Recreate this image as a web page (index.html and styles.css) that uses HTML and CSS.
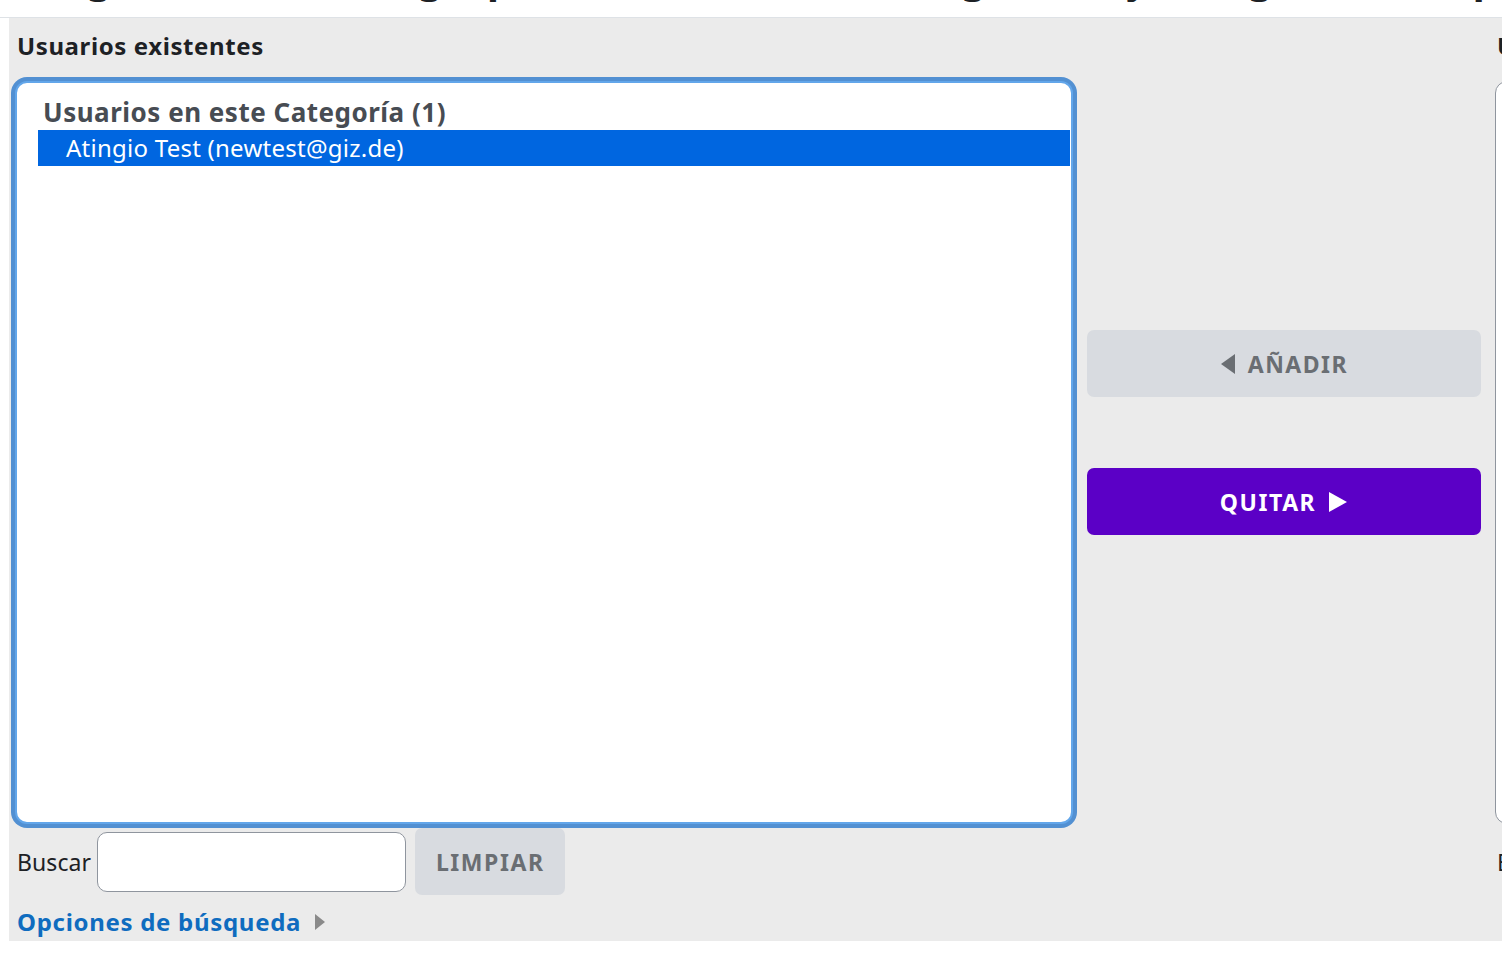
FILE: index.html
```html
<!DOCTYPE html>
<html lang="es">
<head>
<meta charset="utf-8">
<title>Asignar usuarios</title>
<link rel="stylesheet" href="styles.css">
</head>
<body>
<div class="page">
  <div class="page-head">
    <h2 class="page-title">Asignar usuarios al grupo de la institución Atingio Test y la organización principal</h2>
  </div>
  <div class="assign">
    <div class="col col-side">
      <div class="col-label">Usuarios existentes</div>
      <div class="listbox focused">
        <div class="optgroup">Usuarios en este Categoría (1)</div>
        <div class="option selected">Atingio Test (newtest@giz.de)</div>
      </div>
      <div class="search-row">
        <span class="search-label">Buscar</span>
        <span class="search-input"></span>
        <span class="btn btn-light">LIMPIAR</span>
      </div>
      <div class="options-link">Opciones de búsqueda
        <svg class="caret" width="11" height="18" viewBox="0 0 11 18"><polygon points="0,1 10,9 0,17" fill="#8a8a8a"/></svg>
      </div>
    </div>
    <div class="col col-mid">
      <span class="btn btn-light btn-wide">
        <svg width="16" height="20" viewBox="0 0 16 20"><polygon points="15,0 15,20 1,10" fill="#6a6e73"/></svg>
        AÑADIR
      </span>
      <span class="btn btn-primary btn-wide">
        QUITAR
        <svg width="20" height="20" viewBox="0 0 20 20"><polygon points="1,0 1,20 19,10" fill="#ffffff"/></svg>
      </span>
    </div>
    <div class="col col-side">
      <div class="col-label">Usuarios potenciales</div>
      <div class="listbox">
        <div class="optgroup">Usuarios potenciales (0)</div>
      </div>
      <div class="search-row">
        <span class="search-label">Buscar</span>
        <span class="search-input"></span>
        <span class="btn btn-light">LIMPIAR</span>
      </div>
    </div>
  </div>
</div>
</body>
</html>
```

FILE: styles.css
```css
html, body {
  margin: 0;
  padding: 0;
  background: #ffffff;
  overflow: hidden;
}
body {
  font-family: "Noto Sans", "Liberation Sans", sans-serif;
  color: #1d2125;
  width: 1502px;
  height: 956px;
}
.page {
  width: 2700px;
  padding-left: 9px;
}
.page-head {
  height: 17px;
  overflow: hidden;
  border-bottom: 1px solid #dee2e6;
  margin-left: -9px;
  padding-left: 9px;
}
.page-title {
  margin: -42px 0 0 18px;
  font-size: 40px;
  line-height: 1;
  font-weight: 700;
  white-space: nowrap;
  color: #1d2125;
}
.assign {
  display: flex;
  gap: 14px;
  background: #ebebeb;
  padding: 12px 0 3px 0;
}
.col-side {
  width: 1058px;
  padding-left: 6px;
  display: flex;
  flex-direction: column;
}
.col-side + .col-mid + .col-side {
  padding-left: 0;
}
.col-label {
  padding-left: 2px;
  font-size: 24px;
  line-height: 32px;
  font-weight: 700;
  letter-spacing: 0.6px;
  color: #1d2125;
  margin-bottom: 19px;
}
.listbox {
  box-sizing: border-box;
  height: 743px;
  border: 1.5px solid #8f959e;
  border-radius: 12px;
  background: #ffffff;
  padding: 11px 1px 0 21px;
}
.listbox.focused {
  border: 2px solid #62a6ea;
  box-shadow: 0 0 0 4px #5290d2;
  padding-left: 21px;
}
.optgroup {
  padding-left: 5px;
  font-size: 26px;
  line-height: 36px;
  font-weight: 700;
  letter-spacing: 0.5px;
  color: #474c53;
}
.option {
  padding-left: 28px;
  font-size: 24px;
  line-height: 36px;
  letter-spacing: 0.25px;
  color: #1d2125;
}
.option.selected {
  background: #0066e0;
  color: #ffffff;
}
.search-row {
  margin-top: 4px;
  display: flex;
  align-items: center;
  gap: 6px;
  padding-left: 2px;
}
.search-label {
  font-size: 23px;
  letter-spacing: 0.1px;
  color: #1d2125;
}
.search-input {
  box-sizing: border-box;
  width: 309px;
  height: 60px;
  border: 1.5px solid #8f959e;
  border-radius: 10px;
  background: #ffffff;
}
.search-input + .btn {
  margin-left: 3px;
}
.btn {
  box-sizing: border-box;
  display: inline-flex;
  align-items: center;
  justify-content: center;
  gap: 12px;
  height: 67px;
  border-radius: 7px;
  font-size: 23px;
  font-weight: 700;
  letter-spacing: 1.55px;
}
.btn-light {
  width: 150px;
  background: #d8dbe0;
  color: #6a6e73;
}
.btn-primary {
  background: #5b00c6;
  color: #ffffff;
}
.btn-wide {
  width: 394px;
}
.col-mid {
  width: 394px;
  display: flex;
  flex-direction: column;
  gap: 71px;
  padding-top: 300px;
}
.options-link {
  padding-left: 2px;
  margin-top: 11px;
  font-size: 24px;
  line-height: 32px;
  font-weight: 700;
  letter-spacing: 0.7px;
  color: #0f6cbf;
  display: flex;
  align-items: center;
  gap: 14px;
}
.caret {
  display: block;
}
```
